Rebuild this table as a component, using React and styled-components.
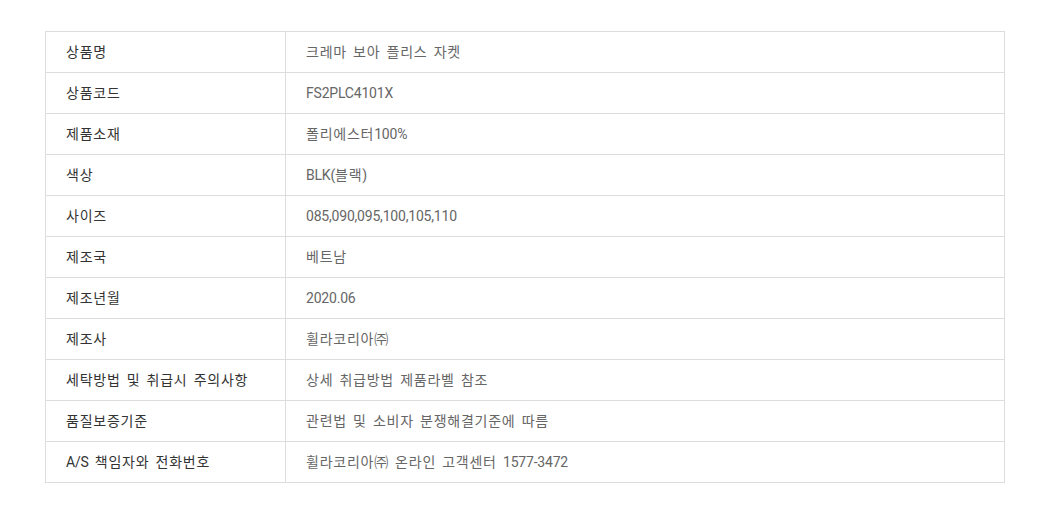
import React from 'react';
import styled, { createGlobalStyle } from 'styled-components';

const rows = [
  ['상품명', '크레마 보아 플리스 자켓'],
  ['상품코드', 'FS2PLC4101X'],
  ['제품소재', '폴리에스터100%'],
  ['색상', 'BLK(블랙)'],
  ['사이즈', '085,090,095,100,105,110'],
  ['제조국', '베트남'],
  ['제조년월', '2020.06'],
  ['제조사', '휠라코리아㈜'],
  ['세탁방법 및 취급시 주의사항', '상세 취급방법 제품라벨 참조'],
  ['품질보증기준', '관련법 및 소비자 분쟁해결기준에 따름'],
  ['A/S 책임자와 전화번호', '휠라코리아㈜ 온라인 고객센터 1577-3472'],
];

// Hangul is set a little wider than the Latin text, as in the original page font
const HANGUL_RUN = /([\uAC00-\uD7A3\u3200-\u321F\s]+)/;

function Text({ children }) {
  return children
    .split(HANGUL_RUN)
    .filter(Boolean)
    .map((part, i) =>
      HANGUL_RUN.test(part) && /[^\s]/.test(part) ? <Hangul key={i}>{part}</Hangul> : part
    );
}

export default function App() {
  return (
    <>
      <GlobalStyle />
      <Page>
        <InfoTable>
          <colgroup>
            <LabelCol />
            <col />
          </colgroup>
          <tbody>
            {rows.map(([label, value]) => (
              <tr key={label}>
                <Label><Text>{label}</Text></Label>
                <Value><Text>{value}</Text></Value>
              </tr>
            ))}
          </tbody>
        </InfoTable>
      </Page>
    </>
  );
}

const GlobalStyle = createGlobalStyle`
  html, body {
    margin: 0;
    background: #fff;
  }
  body {
    font-family: Roboto, "Noto Sans CJK KR", sans-serif;
  }
`;

const Page = styled.div`
  padding: 31px 34px 0 45px;
`;

const LabelCol = styled.col`
  width: 240px;
`;

const InfoTable = styled.table`
  width: 960px;
  border-collapse: collapse;
  table-layout: fixed;
  font-size: 14px;
  letter-spacing: -0.2px;
  word-spacing: 2px;

  td {
    height: 40px;
    padding: 0 20px;
    border: 1px solid #dddddd;
    vertical-align: middle;
    line-height: 20px;
  }
`;

const Hangul = styled.span`
  letter-spacing: 0.75px;
`;

const Label = styled.td`
  color: #333;
`;

const Value = styled.td`
  color: #666;
`;
